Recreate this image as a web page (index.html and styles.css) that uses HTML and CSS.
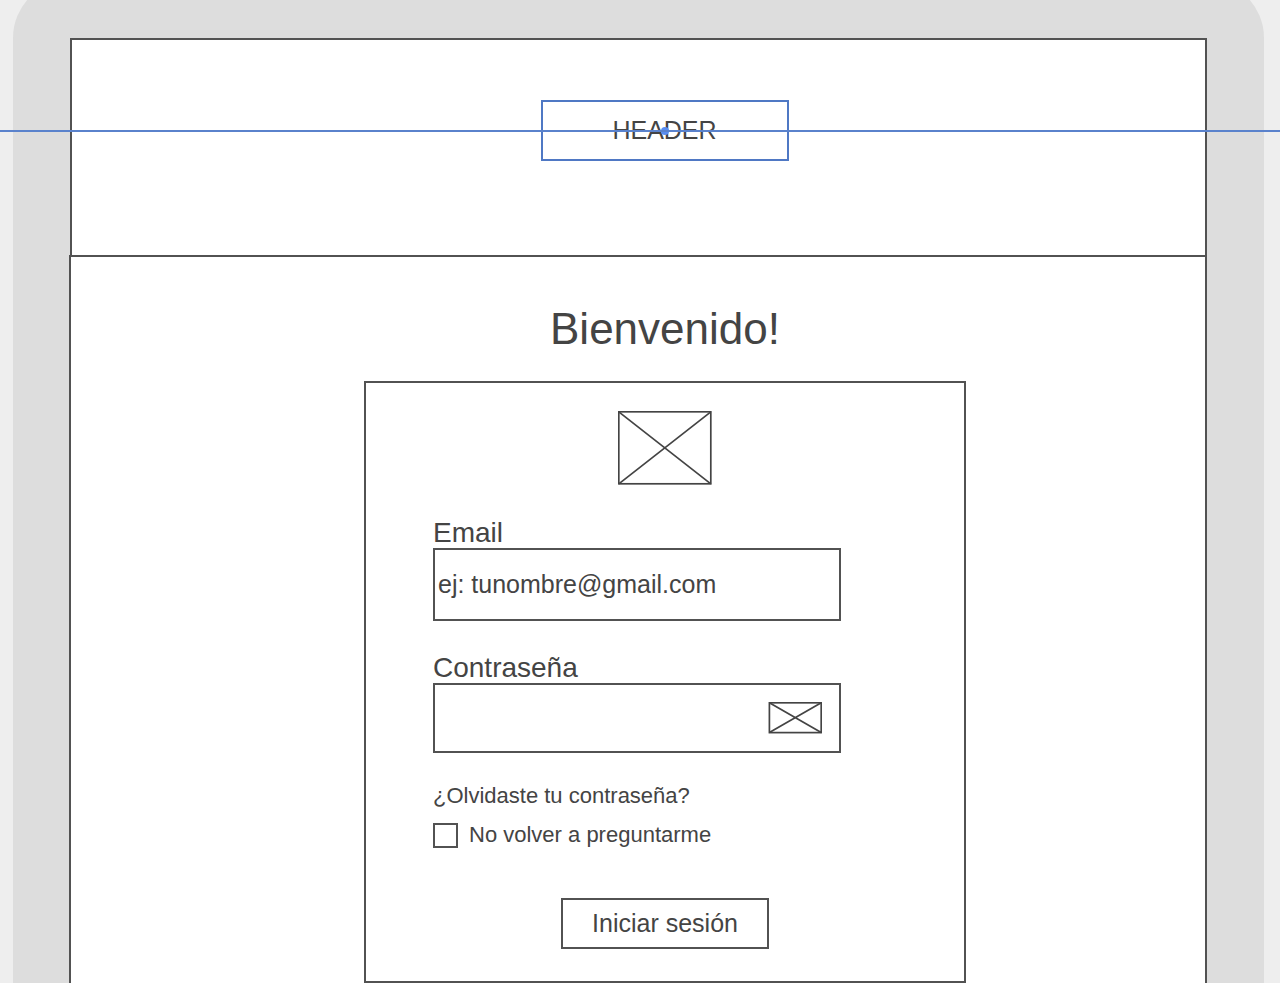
FILE: index.html
```html
<!DOCTYPE html>
<html lang="es">
<head>
<meta charset="utf-8">
<meta name="viewport" content="width=device-width, initial-scale=1">
<title>Bienvenido</title>
<link rel="stylesheet" href="styles.css">
</head>
<body>
<div class="device">
  <header class="site-header">
    <div class="header-box">HEADER<span class="handle"></span></div>
  </header>
  <main class="content">
    <h1 class="title">Bienvenido!</h1>
    <form class="card">
      <svg class="logo" viewBox="0 0 94 74" fill="none" stroke="currentColor" stroke-width="1.7" aria-hidden="true">
        <rect x=".8" y=".8" width="92" height="72"/>
        <path d="M.8 .8 92.8 72.8M92.8 .8 .8 72.8"/>
      </svg>
      <div class="fields">
        <div class="field">
          <label class="label" for="email">Email</label>
          <input class="box box-email" id="email" type="email" placeholder="ej: tunombre@gmail.com">
        </div>
        <div class="field">
          <label class="label" for="password">Contraseña</label>
          <div class="box box-password">
            <input class="password" id="password" type="password">
            <button class="reveal" type="button" aria-label="Mostrar contraseña">
              <svg class="reveal-icon" viewBox="0 0 54 32" fill="none" stroke="currentColor" stroke-width="1.7" aria-hidden="true">
                <rect x="1.4" y=".8" width="51.8" height="29.8"/>
                <path d="M1.4 .8 53.2 30.6M53.2 .8 1.4 30.6"/>
              </svg>
            </button>
          </div>
        </div>
        <div class="options">
          <a class="forgot" href="#">¿Olvidaste tu contraseña?</a>
          <label class="remember"><input class="check" type="checkbox">No volver a preguntarme</label>
        </div>
      </div>
      <button class="submit" type="submit">Iniciar sesión</button>
    </form>
  </main>
</div>
<div class="guide"></div>
</body>
</html>
```
FILE: styles.css
```css
* {
  box-sizing: border-box;
}

body {
  --ink: #444;
  --line: #525252;
  --blue: #4f78c4;
  display: flex;
  flex-direction: column;
  position: relative;
  min-height: 100vh;
  margin: 0;
  overflow-x: hidden;
  background: #eee;
  color: var(--ink);
  font-family: "Liberation Sans", Arial, sans-serif;
  font-size: 25px;
}

input,
button {
  margin: 0;
  color: inherit;
  font: inherit;
}

.device {
  display: flex;
  flex: 1;
  flex-direction: column;
  margin: -20px 16px 0 13px;
  padding: 58px 57px 0 56px;
  border-radius: 58px 58px 0 0;
  background: #ddd;
}

.site-header {
  display: flex;
  justify-content: center;
  margin-left: 1px;
  padding: 60px 0 94px 52px;
  border: 2px solid var(--line);
  border-bottom: 0;
  background: #fff;
}

.header-box {
  display: flex;
  align-items: center;
  justify-content: center;
  position: relative;
  width: 248px;
  height: 61px;
  border: 2px solid var(--blue);
}

.handle {
  position: absolute;
  inset: 0;
  width: 8px;
  height: 8px;
  margin: auto;
  border-radius: 50%;
  background: #5a8df0;
}

.guide {
  position: absolute;
  top: 130px;
  left: 0;
  width: 100%;
  border-top: 2px solid #5a82cc;
  pointer-events: none;
}

.content {
  display: flex;
  flex: 1;
  flex-direction: column;
  align-items: center;
  padding: 46px 0 0 54px;
  border: 2px solid var(--line);
  border-bottom: 0;
  background: #fff;
}

.title {
  margin: 0 0 26px;
  font-size: 44px;
  font-weight: 400;
  line-height: 52px;
}

.card {
  display: flex;
  flex-direction: column;
  align-items: center;
  width: 602px;
  max-width: 100%;
  padding: 28px 67px 32px;
  border: 2px solid var(--line);
}

.logo {
  width: 94px;
  height: 74px;
  margin-bottom: 31px;
}

.fields {
  display: flex;
  flex-direction: column;
  align-self: flex-start;
  gap: 30px;
  width: 408px;
  max-width: 100%;
  margin-bottom: 50px;
}

.field {
  display: flex;
  flex-direction: column;
}

.label {
  padding-top: 2px;
  font-size: 28px;
  line-height: 30px;
}

.box {
  width: 100%;
  border: 2px solid var(--line);
  background: #fff;
}

.box-email {
  height: 73px;
  padding: 0 3px;
}

.box-email::placeholder {
  color: var(--ink);
  opacity: 1;
}

.box-password {
  display: flex;
  align-items: center;
  height: 70px;
  padding-right: 17px;
}

.password {
  flex: 1;
  min-width: 0;
  height: 100%;
  padding: 0 3px;
  border: 0;
  background: none;
}

.reveal {
  display: flex;
  padding: 0;
  border: 0;
  background: none;
}

.reveal-icon {
  width: 54px;
  height: 32px;
}

.options {
  display: flex;
  flex-direction: column;
  align-items: flex-start;
  gap: 13px;
  font-size: 22px;
  line-height: 26px;
}

.forgot {
  color: inherit;
  text-decoration: none;
}

.remember {
  display: flex;
  align-items: center;
  gap: 11px;
}

.check {
  width: 25px;
  height: 25px;
  border: 2px solid var(--line);
  background: #fff;
  appearance: none;
}

.check:checked {
  background: var(--line);
}

.submit {
  width: 208px;
  height: 51px;
  padding: 0;
  border: 2px solid var(--line);
  background: #fff;
}
```
